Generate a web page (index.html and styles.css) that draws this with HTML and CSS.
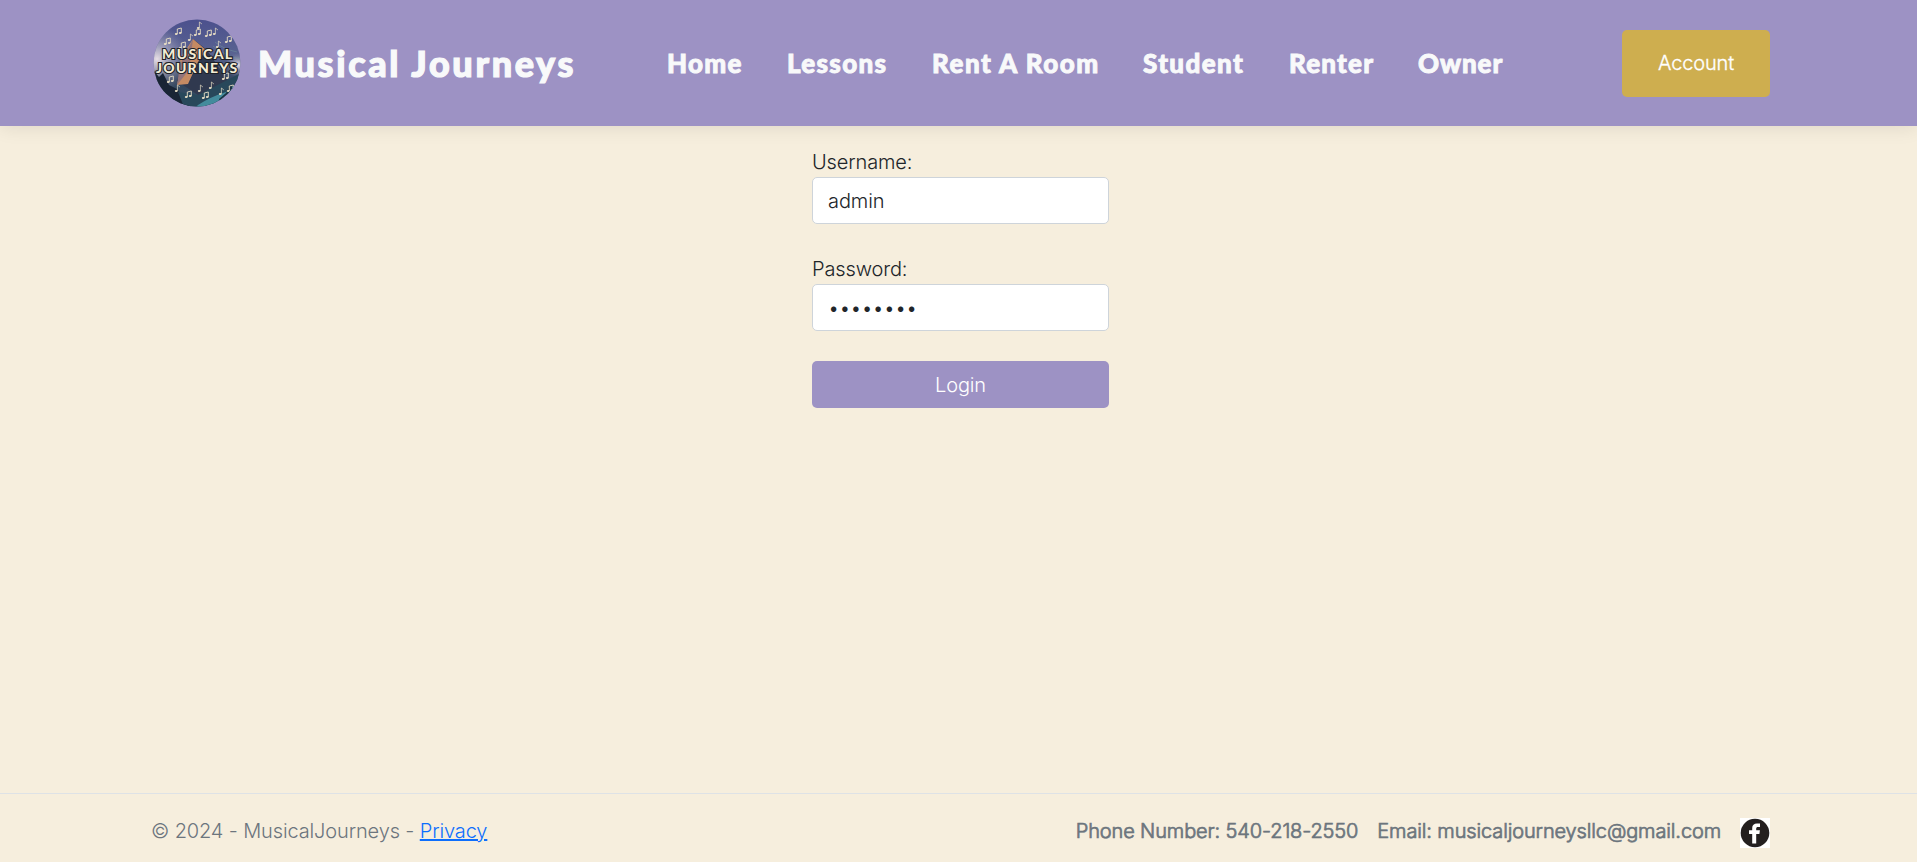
FILE: index.html
```html
<!DOCTYPE html>
<html lang="en">
<head>
<meta charset="utf-8">
<title>Login - MusicalJourneys</title>
<link rel="stylesheet" href="styles.css">
</head>
<body>
<header class="header">
  <div class="container header-row">
    <a class="brand">
      <svg class="logo" viewBox="0 0 88 88">
        <defs>
          <clipPath id="disc"><circle cx="44" cy="44" r="43.5"/></clipPath>
          <linearGradient id="sky" x1="0" y1="0" x2="0" y2="1"><stop offset="0" stop-color="#4b508d"/><stop offset=".4" stop-color="#596391"/><stop offset=".7" stop-color="#35465e"/><stop offset="1" stop-color="#304d62"/></linearGradient>
          <radialGradient id="mist"><stop offset="0" stop-color="#e8dfe6"/><stop offset="1" stop-color="#9a98b5" stop-opacity="0"/></radialGradient>
          <g id="note"><ellipse cx="1.2" cy="6" rx="1.4" ry="1"/><path d="M2.4 6V0l2.5 2" fill="none" stroke="#e9dfc5" stroke-width=".7"/></g>
          <g id="pair"><ellipse cx="1.2" cy="6" rx="1.4" ry="1"/><ellipse cx="5.2" cy="5" rx="1.4" ry="1"/><path d="M2.3 6V1l4-1v5" fill="none" stroke="#e9dfc5" stroke-width=".9"/></g>
        </defs>
        <g clip-path="url(#disc)">
          <rect width="88" height="88" fill="url(#sky)"/>
          <ellipse cx="4" cy="40" rx="32" ry="34" fill="url(#mist)"/>
          <ellipse cx="85" cy="46" rx="13" ry="12" fill="url(#mist)"/>
          <path d="M24 62 40 20 54 31 77 65 45 76z" fill="#30394f"/>
          <path d="M40 20 53 31 45 43 35 65 24 66 28 49 27 40z" fill="#c58a63"/>
          <path d="m40 20-4 31-12 15 3-20z" fill="#93747a"/>
          <path d="m0 51 6 7 4-4 6 12 8 4 14 18H0z" fill="#192435"/>
          <path d="m25 73 20 3 43-22v34H31z" fill="#28485b"/>
          <path d="M45 86q12-8 28-13l10-8v23H43z" fill="#438b9c"/>
          <path d="m66 80 7-6 4-8 5 6 6-9v25H66z" fill="#1c3342"/>
          <path d="M62 23q8 7 22 10M60 27q12 10 27 13" fill="none" stroke="#73979f" stroke-width=".5"/>
          <g fill="#e9dfc5">
            <use href="#pair" x="22" y="9"/><use href="#pair" x="41" y="10"/><use href="#pair" x="52" y="11"/><use href="#note" x="60" y="9"/><use href="#pair" x="72" y="17"/><use href="#note" x="44" y="3"/><use href="#pair" x="11" y="19"/><use href="#pair" x="26" y="23"/><use href="#note" x="35" y="15"/><use href="#note" x="63" y="22"/>
            <use href="#pair" x="14" y="57"/><use href="#note" x="22" y="66"/><use href="#pair" x="32" y="72"/><use href="#pair" x="49" y="73"/><use href="#note" x="45" y="66"/><use href="#pair" x="69" y="54"/><use href="#note" x="66" y="69"/><use href="#pair" x="74" y="66"/><use href="#note" x="56" y="63"/>
          </g>
        </g>
        <g class="logo-text"><text x="9" y="40" textLength="70">MUSICAL</text><text x="3" y="54" textLength="81">JOURNEYS</text></g>
      </svg>
      <span class="brand-name">Musical Journeys</span>
    </a>
    <nav class="nav">
      <a class="home">Home</a><a class="lessons">Lessons</a><a class="rent">Rent A Room</a><a class="student">Student</a><a class="renter">Renter</a><a class="owner">Owner</a>
    </nav>
    <button class="account">Account</button>
  </div>
</header>
<main class="main">
  <form class="form">
    <label for="user">Username:</label>
    <input id="user" type="text" value="admin">
    <label for="pass">Password:</label>
    <input id="pass" type="password" value="password">
    <button class="login" type="button">Login</button>
  </form>
</main>
<footer class="footer">
  <div class="container footer-row">
    <div class="copy">© 2024 - MusicalJourneys - <a href="#">Privacy</a></div>
    <div class="contact">
      <span class="phone">Phone Number: 540-218-2550</span><span class="email">Email: musicaljourneysllc@gmail.com</span>
      <svg class="facebook" viewBox="0 0 30 30"><rect width="30" height="30" fill="#fff"/><circle cx="15" cy="15" r="14.3" fill="#231f20"/><path d="M12.2 25.5V16H9v-3.7h3.2V10c0-3.1 1.9-4.6 4.8-4.6h3V9h-2c-1.3 0-1.8.6-1.8 1.7v1.6h3.7l-.5 3.7h-3.2v9.5z" fill="#fff"/></svg>
    </div>
  </div>
</footer>
</body>
</html>
```
FILE: styles.css
```css
* { box-sizing: border-box; }
body { margin: 0; height: 862px; display: flex; flex-direction: column; overflow: hidden; background: #f6eedd; color: #212529; font: 300 20px/30px Inter, sans-serif; letter-spacing: -.13px; }
.container { width: 1619px; margin: 0 auto 0 151px; display: flex; align-items: center; }
.header { height: 126px; flex: none; background: #9d92c4; box-shadow: 0 2px 18px rgba(0,0,0,.09); }
.header-row { height: 126px; }
.brand { display: flex; align-items: center; width: 516px; padding-left: 2px; }
.logo { width: 88px; height: 88px; margin-right: 17px; flex: none; }
.logo-text { font: 900 14px Lato, sans-serif; fill: #f4ecd4; stroke: #1d2027; stroke-width: 2.2px; paint-order: stroke; }
.brand-name, .nav a { font-family: Lato, sans-serif; font-weight: 900; color: #f8f9fa; white-space: nowrap; -webkit-text-stroke: 1.2px #f8f9fa; }
.brand-name { font-size: 36px; line-height: 44px; letter-spacing: 2.65px; }
.nav { display: flex; gap: 45px; flex: 1; }
.nav a { font-size: 26px; letter-spacing: 1.4px; -webkit-text-stroke-width: .9px; }
.nav .home { width: 75px; letter-spacing: 1.3px; }
.nav .lessons { width: 100px; letter-spacing: 1.3px; }
.nav .rent { width: 166px; letter-spacing: 1.5px; }
.nav .student { width: 101px; }
.nav .renter { width: 84px; letter-spacing: 1.2px; }
.nav .owner { width: 85px; letter-spacing: .9px; }
button { border: 0; border-radius: 5px; font: inherit; letter-spacing: inherit; color: #fff; }
.account { width: 148px; height: 67px; background: #ceae4f; -webkit-text-stroke: .3px #fff; }
.main { flex: 1; }
.form { width: 297px; margin: 21px 0 0 812px; display: flex; flex-direction: column; }
.form input { width: 100%; height: 47px; padding: 6px 14px 6px 15px; border: 1px solid #ced4da; border-radius: 5px; background: #fff; color: #212529; font: inherit; letter-spacing: -.1px; margin-bottom: 30px; }
.login { height: 47px; background: #9d92c4; }
.footer { height: 69px; flex: none; border-top: 1px solid #dee2e6; color: #6c757d; }
.footer-row { height: 73px; justify-content: space-between; }
.copy a { color: #0d6efd; }
.contact { display: flex; align-items: center; -webkit-text-stroke: .7px #6c757d; }
.email { margin-left: 19px; }
.facebook { width: 30px; height: 30px; margin: 5px 0 0 19px; }
```
